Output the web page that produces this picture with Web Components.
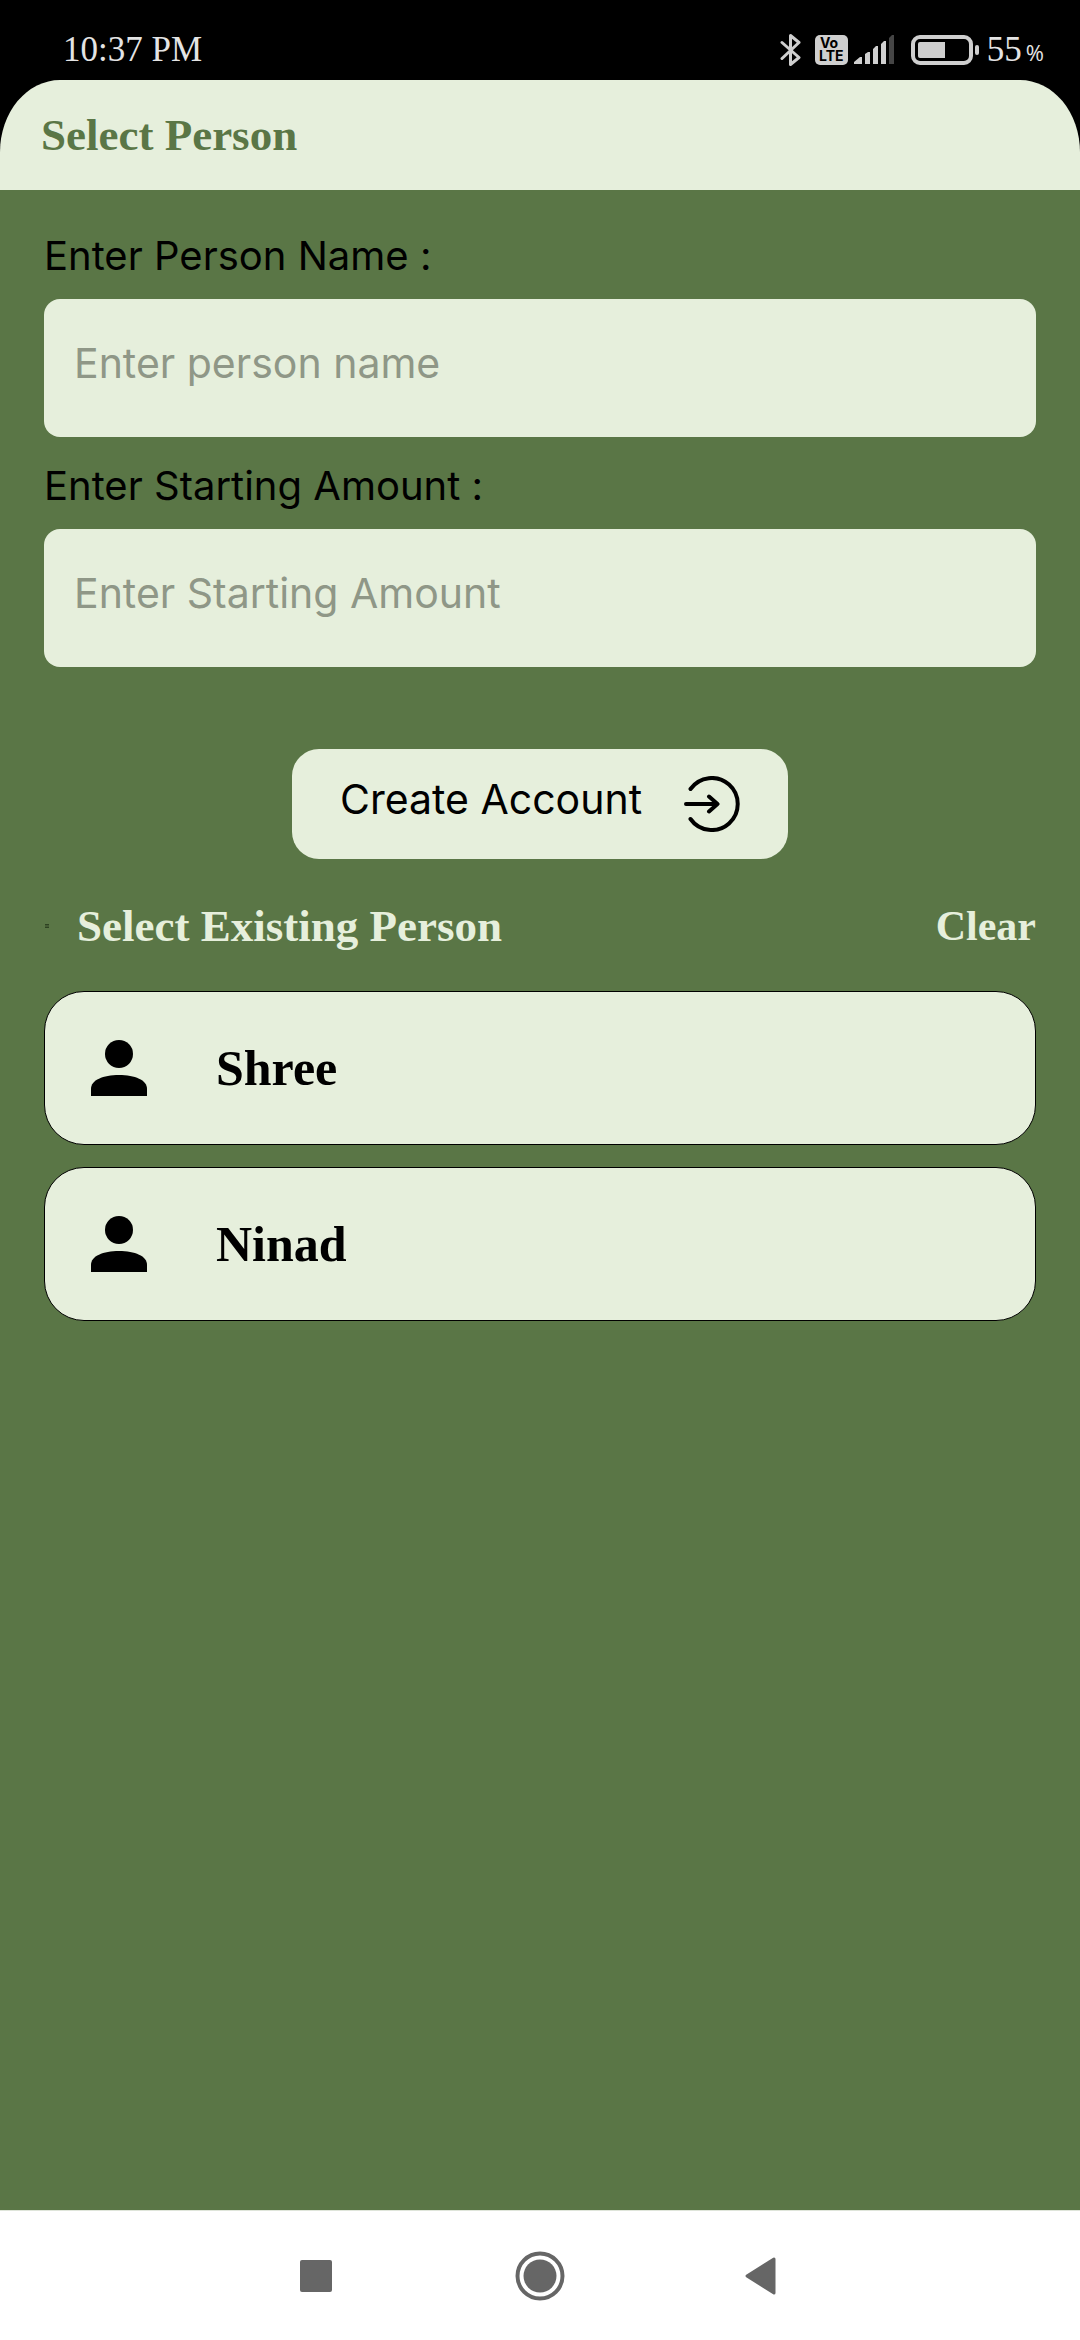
<!DOCTYPE html>
<html lang="en">
<head>
<meta charset="utf-8">
<meta name="viewport" content="width=device-width, initial-scale=1">
<title>Select Person</title>
<style>
  body {
    --green: #5a7646;
    --light: #e6efdc;
    --sans: Inter, "Open Sans", sans-serif;
    --serif: "Liberation Serif", serif;
    margin: 0;
    background: #000;
    color: #000;
    font-family: var(--sans);
    font-size: 41px;
    line-height: 60px;
  }
</style>
</head>
<body>
<person-app>
  <status-bar slot="top" time="10:37 PM" battery="55"></status-bar>
  <app-header slot="top">Select Person</app-header>
  <text-field label="Enter Person Name :" hint="Enter person name"></text-field>
  <text-field label="Enter Starting Amount :" hint="Enter Starting Amount"></text-field>
  <create-button>Create Account</create-button>
  <list-heading action="Clear">Select Existing Person</list-heading>
  <person-list>
    <person-card>Shree</person-card>
    <person-card>Ninad</person-card>
  </person-list>
  <nav-bar slot="bottom"></nav-bar>
</person-app>

<script>
const define = (name, render) => customElements.define(name, class extends HTMLElement {
  connectedCallback() {
    if (this.shadowRoot) return;
    this.attachShadow({ mode: 'open' }).innerHTML =
      '<style>*{box-sizing:border-box}svg{display:block;flex:none}button{font:inherit;color:inherit;border:0;background:none;margin:0;padding:0}</style>' + render(this);
  }
});

define('person-app', () => `
  <style>
    :host { display: flex; flex-direction: column; min-height: 100vh; }
    main { flex: 1; background: var(--green); padding: 36px 44px; }
  </style>
  <slot name="top"></slot>
  <main><slot></slot></main>
  <slot name="bottom"></slot>`);

define('status-bar', el => `
  <style>
    :host { display: flex; justify-content: space-between; align-items: center; height: 80px;
      box-sizing: border-box; padding: 19px 36px 0 63px; background: #000; color: #e4e4e4;
      font-family: var(--serif); font-size: 35px; line-height: 40px; }
    .icons { display: flex; align-items: center; }
    .bt { margin-right: 13px; }
    .lte { margin-right: 6px; }
    .signal { margin-right: 16px; }
    .battery { margin-right: 8px; }
    .level { display: flex; align-items: baseline; gap: 4px; }
    small { font: 22px/24px "Open Sans", sans-serif; }
  </style>
  <time>${el.getAttribute('time')}</time>
  <div class="icons">
    <svg class="bt" width="22" height="34" viewBox="0 0 22 34" fill="none" stroke="#cfcfcf" stroke-width="3" stroke-linejoin="round" stroke-linecap="round"><path d="M2 9.500 19 24.500 10.500 31.500V2.500L19 9.500 2 25.500"/></svg>
    <svg class="lte" width="33" height="30" viewBox="0 0 33 30"><rect width="33" height="30" rx="5" fill="#cfcfcf"/>
      <g font-family="Inter, sans-serif" font-weight="700" font-size="14" fill="#000"><text x="5" y="13">Vo</text><text x="4" y="26">LTE</text></g></svg>
    <svg class="signal" width="41" height="30" viewBox="0 0 41 30" fill="#cfcfcf"><path d="M0 29v-2l6-5h2v7zM11 29V19l3-2h2v12zM19 29V14l3-3h2v18zM27 29V9l3-3h2v23z"/><path fill="#454545" d="M35 29V3l3-3h2v29z"/></svg>
    <svg class="battery" width="68" height="30" viewBox="0 0 68 30"><rect x="2" y="2" width="58" height="26" rx="7" fill="none" stroke="#cfcfcf" stroke-width="4"/><path fill="#cfcfcf" d="M9 7h25v16H9q-2 0-2-2V9q0-2 2-2"/><rect x="64" y="10" width="4" height="10" rx="2" fill="#cfcfcf"/></svg>
    <span class="level"><span>${el.getAttribute('battery')}</span><small>%</small></span>
  </div>`);

define('app-header', () => `
  <style>
    :host { display: block; background: var(--light); color: var(--green);
      border-radius: 60px 60px 0 0 / 72px 72px 0 0; padding: 25px 41px; }
    h1 { margin: 0; font: bold 45px/60px var(--serif); }
  </style>
  <h1><slot></slot></h1>`);

define('text-field', el => `
  <style>
    :host { display: block; margin-bottom: 18px; }
    label { display: block; margin-bottom: 13px; font-size: 40px; }
    input { display: block; width: 100%; height: 138px; padding: 0 30px 10px; border: 0; border-radius: 16px;
      background: var(--light); color: #000; font: inherit; outline: 0; }
    input::placeholder { color: #8f9787; opacity: 1; }
    :host(:not(:first-of-type)) { margin-top: 19px; }
  </style>
  <label for="box">${el.getAttribute('label')}</label>
  <input id="box" type="text" placeholder="${el.getAttribute('hint')}">`);

define('create-button', () => `
  <style>
    :host { display: flex; justify-content: center; margin: 82px 0 37px; }
    button { display: flex; align-items: center; justify-content: space-between; min-width: 496px; height: 110px;
      padding: 0 48px; border-radius: 27px; background: var(--light); }
    span { padding-bottom: 10px; }
  </style>
  <button type="button"><span><slot></slot></span>
    <svg width="56" height="56" viewBox="0 0 56 56" fill="none" stroke="#000" stroke-width="4" stroke-linecap="round" stroke-linejoin="round"><path d="M6.500 13A26 26 0 1 1 6.500 43M2 28H33M25 20.500 33.500 28 25 35.500"/></svg>
  </button>`);

define('list-heading', el => `
  <style>
    :host { display: flex; align-items: center; margin-bottom: 35px; color: var(--light);
      font: bold 45px/60px var(--serif); }
    svg { margin: 0 28px 0 1px; }
    h2 { flex: 1; margin: 0; font: inherit; }
    button { font-size: 42px; }
  </style>
  <svg width="4" height="4" viewBox="0 0 4 4" fill="#2e4222"><path d="M0 0h4v1.500H0zM0 2.500h4V4H0z"/></svg>
  <h2><slot></slot></h2>
  <button type="button">${el.getAttribute('action')}</button>`);

define('person-list', () => `
  <style>:host { display: flex; flex-direction: column; gap: 22px; }</style>
  <slot></slot>`);

define('person-card', () => `
  <style>
    :host { display: block; }
    button { display: flex; align-items: center; gap: 69px; width: 100%; height: 154px; padding: 0 46px;
      border: 1px solid #000; border-radius: 40px; background: var(--light);
      font: bold 50px/60px var(--serif); text-align: left; }
  </style>
  <button type="button">
    <svg width="56" height="56" viewBox="0 0 56 56"><circle cx="28" cy="14" r="14"/><path d="M0 56V49C0 40 12 35 28 35S56 40 56 49V56z"/></svg>
    <span><slot></slot></span>
  </button>`);

define('nav-bar', () => `
  <style>
    :host { display: block; background: #fff; border-top: 1px solid #dfe5da; }
    nav { display: flex; justify-content: center; height: 129px; }
    button { display: flex; align-items: center; justify-content: center; width: 224px; }
  </style>
  <nav>
    <button type="button" aria-label="Recent apps"><svg width="32" height="32" viewBox="0 0 32 32"><rect width="32" height="32" rx="2" fill="#666"/></svg></button>
    <button type="button" aria-label="Home"><svg width="50" height="50" viewBox="0 0 50 50"><circle cx="25" cy="25" r="22.500" fill="none" stroke="#666" stroke-width="4"/><circle cx="25" cy="25" r="16.500" fill="#666"/></svg></button>
    <button type="button" aria-label="Back"><svg width="40" height="38" viewBox="0 0 40 38"><path d="M3 19 30 2V36z" fill="#666" stroke="#666" stroke-width="3" stroke-linejoin="round"/></svg></button>
  </nav>`);
</script>
</body>
</html>
